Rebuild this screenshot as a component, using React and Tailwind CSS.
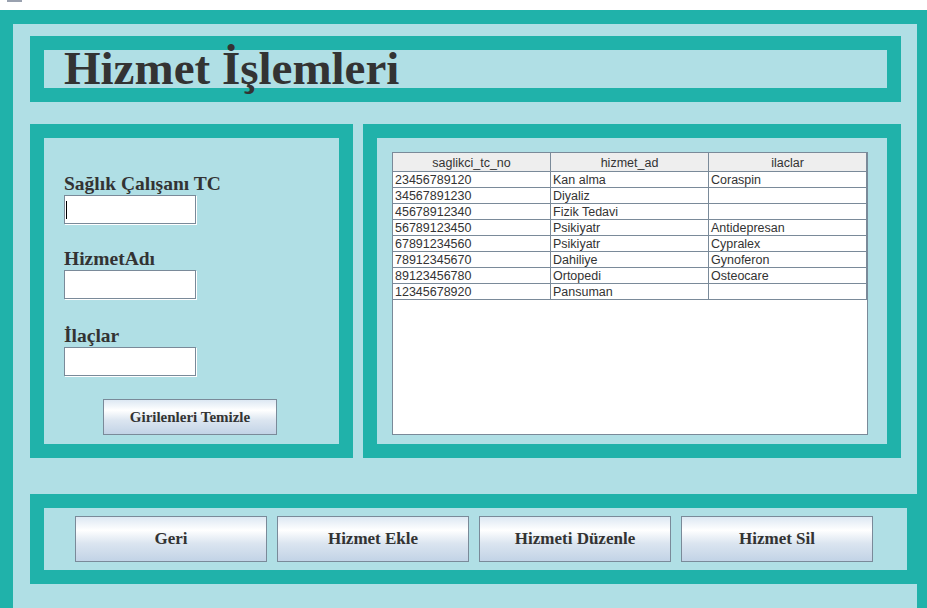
import React from 'react';

const rows = [
  ['23456789120', 'Kan alma', 'Coraspin'],
  ['34567891230', 'Diyaliz', ''],
  ['45678912340', 'Fizik Tedavi', ''],
  ['56789123450', 'Psikiyatr', 'Antidepresan'],
  ['67891234560', 'Psikiyatr', 'Cypralex'],
  ['78912345670', 'Dahiliye', 'Gynoferon'],
  ['89123456780', 'Ortopedi', 'Osteocare'],
  ['12345678920', 'Pansuman', ''],
];

const serif = "font-['Liberation_Serif',serif]";
const sans = "font-['Liberation_Sans',Arial,sans-serif]";
const metal =
  'bg-[linear-gradient(to_bottom,#dde8f3_0%,#ffffff_30%,#dbe5f0_60%,#c2d3e6_100%)] border border-[#7a8a99]';

function Field({ label, top, cursor = false }) {
  return (
    <div className={top}>
      <div className={`${serif} h-[22px] leading-[22px] text-[19.5px] font-bold text-[#333]`}>{label}</div>
      <div className="relative h-[29px] w-[132px] border border-[#7a8a99] bg-white shadow-[1px_1px_0_#ffffff]">
        {cursor && <span className="absolute left-[1px] top-[5px] h-[18px] w-px bg-black" />}
      </div>
    </div>
  );
}

export default function App() {
  return (
    <div className="h-[608px] w-[927px] overflow-hidden bg-white">
      <div className="flex h-[10px] items-start pl-[7px]">
        <div className="h-[2px] w-[15px] bg-gray-400" />
      </div>

      <div className="h-[598px] border-l-[13px] border-r-[10px] border-t-[14px] border-[#20b2aa] bg-[#b0dfe5] pl-[17px] pt-[12px]">
        {/* Title */}
        <div className="h-[66px] w-[871px] border-[14px] border-[#20b2aa] bg-[#b0dfe5] pl-[20px]">
          <h1 className={`${serif} text-[47px] font-bold leading-[36px] text-[#333]`}>Hizmet İşlemleri</h1>
        </div>

        <div className="mt-[22px] flex gap-[10px]">
          {/* Form */}
          <div className="h-[334px] w-[323px] border-[14px] border-[#20b2aa] bg-[#b0dfe5] pl-[20px] pt-[35px]">
            <Field label="Sağlık Çalışanı TC" cursor />
            <Field label="HizmetAdı" top="mt-[24px]" />
            <Field label="İlaçlar" top="mt-[26px]" />
            <button
              className={`${serif} ${metal} ml-[39px] mt-[23px] h-[36px] w-[174px] text-[15px] font-bold text-[#333]`}
            >
              Girilenleri Temizle
            </button>
          </div>

          {/* Table */}
          <div className="h-[334px] w-[538px] border-[14px] border-[#20b2aa] bg-[#b0dfe5] pl-[15px] pt-[14px]">
            <div className={`${sans} h-[283px] w-[476px] border border-[#7a8a99] bg-white text-[12.5px] text-[#333]`}>
              <div className="grid h-[19px] grid-cols-[158px_158px_158px] border-b border-[#7a8a99] bg-[#eeeeee]">
                {['saglikci_tc_no', 'hizmet_ad', 'ilaclar'].map((h) => (
                  <div key={h} className="border-r border-[#7a8a99] pt-[1px] text-center leading-[18px]">
                    {h}
                  </div>
                ))}
              </div>
              {rows.map((r) => (
                <div key={r[0]} className="grid h-[16px] grid-cols-[158px_158px_158px] border-b border-[#7a8a99]">
                  {r.map((c, i) => (
                    <div key={i} className="border-r border-[#7a8a99] pl-[2px] pt-[1px] leading-[15px]">
                      {c}
                    </div>
                  ))}
                </div>
              ))}
            </div>
          </div>
        </div>

        {/* Actions */}
        <div className="mt-[36px] flex h-[90px] w-[887px] gap-[10px] border-[14px] border-r-[10px] border-[#20b2aa] bg-[#b0dfe5] pl-[31px] pt-[8px]">
          {['Geri', 'Hizmet Ekle', 'Hizmeti Düzenle', 'Hizmet Sil'].map((b) => (
            <button key={b} className={`${serif} ${metal} h-[46px] w-[192px] text-[17px] font-bold text-[#333]`}>
              {b}
            </button>
          ))}
        </div>
      </div>
    </div>
  );
}
